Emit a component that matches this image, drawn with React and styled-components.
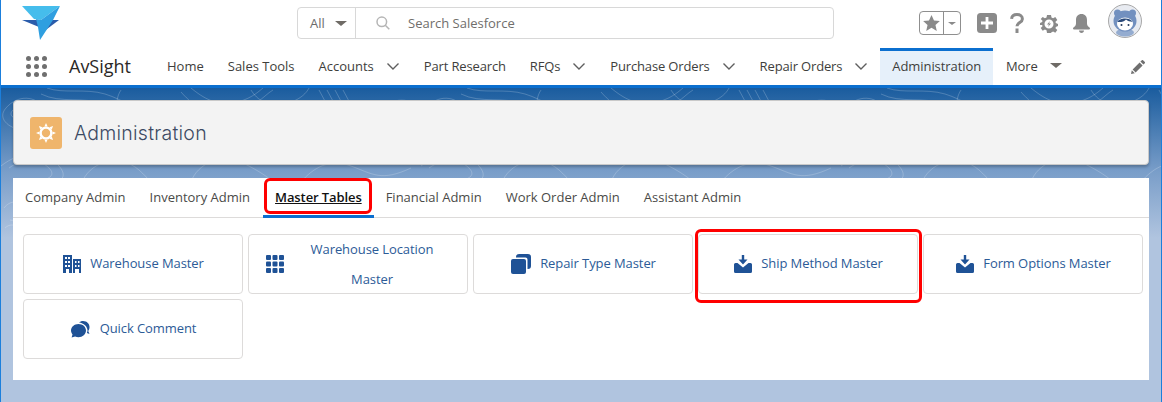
import React from "react";
import styled, { createGlobalStyle } from "styled-components";

const contour = `<svg xmlns='http://www.w3.org/2000/svg' width='420' height='150' fill='none' stroke='white' stroke-opacity='0.2' stroke-width='1'><path d='M5 20c12-14 30-12 38 0s-8 24-22 22S-4 30 5 20z'/><path d='M12 22c8-7 18-6 22 0s-5 12-12 11-16-5-10-11z'/><path d='M40 6c20 10 44 2 60 10s26 24 50 18'/><path d='M46 0c16 6 38 0 58 6s30 18 52 16'/><path d='M120 2c-8 12-4 28 12 34s34-4 40-18'/><path d='M180 4c14 16 32 26 52 22s30-18 40-24'/><path d='M190 0c12 10 26 18 42 15s24-10 30-15'/><path d='M250 2c6 10 18 18 34 14s22-12 24-16'/><path d='M318 2l14 26M326 2l14 26M334 2l14 26M342 2l14 26'/><path d='M370 30c16-20 34-22 48-12'/><path d='M378 36c14-14 28-16 40-8'/><path d='M0 78c20-16 44-16 58 0s-10 22-30 20'/><path d='M8 80c14-10 30-10 40 0s-8 14-20 13'/><path d='M82 92c10-20 38-26 56-10s8 14 8 14'/><path d='M190 94c6-18 30-30 54-18s30 20 30 20'/><path d='M300 94c12-14 28-24 50-16s30 16 60 2'/><path d='M366 62c10-8 26-8 36 0'/><path d='M3 120c6-8 16-8 20 0s-6 14-14 12'/><path d='M4 140c4-4 10-4 14 0'/></svg>`;

const Global = createGlobalStyle`
  html, body { margin: 0; padding: 0; }
  body { font-family: "Open Sans", "Liberation Sans", sans-serif; background: #b0c4df; }
  * { box-sizing: border-box; }
`;

const Page = styled.div`
  width: 1162px;
  height: 402px;
  overflow: hidden;
  display: flex;
  flex-direction: column;
  border-left: 1px solid #1b7fdc;
  border-right: 1px solid #1b7fdc;
  background: #b0c4df;
`;

const Header = styled.header`
  flex: none;
  height: 88px;
  background: #fff;
  border-bottom: 3px solid #0b6fcf;
  display: flex;
  flex-direction: column;
`;

const TopBar = styled.div`
  height: 46px;
  flex: none;
  display: grid;
  grid-template-columns: 296px 537px 1fr;
  align-items: start;
`;

const LogoCell = styled.div`
  padding: 6px 0 0 20px;
  svg { display: block; }
`;

const Search = styled.div`
  margin-top: 7px;
  height: 32px;
  border: 1px solid #d8d8d8;
  border-radius: 4px;
  display: flex;
  align-items: center;
  font-size: 13px;
  color: #6b6b6b;
`;

const ScopeSelect = styled.div`
  width: 58px;
  height: 100%;
  border-right: 1px solid #d8d8d8;
  display: flex;
  align-items: center;
  padding-left: 12px;
  gap: 10px;
`;

const Caret = styled.span`
  display: inline-block;
  width: 0;
  height: 0;
  border-left: ${p => p.$size}px solid transparent;
  border-right: ${p => p.$size}px solid transparent;
  border-top: ${p => Math.round(p.$size * 0.85)}px solid ${p => p.$color || "#6f6b66"};
`;

const SearchField = styled.div`
  flex: 1;
  display: flex;
  align-items: center;
  padding-left: 20px;
  gap: 18px;
  color: #706e6b;
  svg { display: block; }
`;

const Tools = styled.div`
  display: flex;
  align-items: flex-start;
  padding-left: 85px;
  height: 100%;
`;

const Favorite = styled.div`
  margin-top: 11px;
  width: 42px;
  height: 24px;
  border: 1px solid #8f8f8f;
  border-radius: 4px;
  display: flex;
  align-items: center;
`;

const FavStar = styled.div`
  width: 24px;
  height: 100%;
  border-right: 1px solid #8f8f8f;
  display: flex;
  align-items: center;
  justify-content: center;
`;

const FavCaret = styled.div`
  flex: 1;
  display: flex;
  align-items: center;
  justify-content: center;
`;

const ToolIcon = styled.div`
  margin-top: ${p => p.$top}px;
  margin-left: ${p => p.$left}px;
  line-height: 0;
`;

const NavBar = styled.nav`
  flex: 1;
  display: flex;
  align-items: stretch;
  position: relative;
`;

const Waffle = styled.div`
  width: 68px;
  padding: 10px 0 0 25px;
`;

const WaffleGrid = styled.div`
  width: 22px;
  display: grid;
  grid-template-columns: repeat(3, 5px);
  gap: 3px;
`;

const Dot = styled.span`
  width: 5px;
  height: 5px;
  border-radius: 50%;
  background: #6f6f6f;
`;

const AppName = styled.div`
  width: 86px;
  font-size: 18px;
  line-height: 39px;
  color: #2b2826;
  padding-top: 1px;
`;

const NavItem = styled.div`
  display: flex;
  align-items: center;
  font-size: 13px;
  letter-spacing: ${p => (p.$loose ? "0" : p.$active ? "-0.08px" : "-0.15px")};
  color: #3e3e3c;
  padding: 0 12px ${p => (p.$active ? "4px" : "0")};
  height: ${p => (p.$active ? "37px" : "39px")};
  margin-top: ${p => (p.$active ? "2px" : "0")};
  background: ${p => (p.$active ? "#e6f0fa" : "transparent")};
  border-top: ${p => (p.$active ? "3px solid #0b6fcf" : "none")};
  svg { display: block; margin-left: 12px; }
`;

const MoreItem = styled(NavItem)`
  padding-left: 13px;
`;

const MoreCaret = styled.span`
  margin-left: 12px;
  display: inline-flex;
`;

const Pencil = styled.div`
  position: absolute;
  right: 16px;
  top: 14px;
  line-height: 0;
`;

const Canvas = styled.main`
  flex: 1;
  padding: 12px 12px 0 12px;
  background-color: #b0c4df;
  background-image: url("data:image/svg+xml;utf8,${encodeURIComponent(contour)}"),
    linear-gradient(to bottom, #1a5c9e 0, #7a9ec9 84px, #b0c4df 150px, #b0c4df 100%);
  background-repeat: repeat-x, no-repeat;
  background-size: 420px 150px, 100% 100%;
  display: flex;
  flex-direction: column;
  gap: 13px;
`;

const TitlePanel = styled.section`
  height: 65px;
  flex: none;
  background: #f3f3f3;
  border: 1px solid #c9c9c9;
  border-radius: 4px;
  box-shadow: 0 2px 3px rgba(0, 0, 0, 0.25);
  display: flex;
  align-items: center;
  padding-left: 16px;
  gap: 12px;
`;

const TitleIcon = styled.div`
  width: 32px;
  height: 32px;
  border-radius: 3px;
  background: #efb56c;
  display: flex;
  align-items: center;
  justify-content: center;
`;

const Title = styled.h1`
  margin: 0;
  font-family: "Inter", "Open Sans", sans-serif;
  font-weight: 300;
  font-size: 19.5px;
  letter-spacing: 0.25px;
  color: #3c4a63;
`;

const ContentPanel = styled.section`
  background: #fff;
  height: 202px;
  flex: none;
  display: flex;
  flex-direction: column;
`;

const TabBar = styled.div`
  height: 40px;
  flex: none;
  border-bottom: 1px solid #dddbda;
  display: flex;
`;

const Tab = styled.div`
  position: relative;
  padding: 0 12px ${p => (p.$active ? "0" : "3px")};
  margin-left: ${p => (p.$active ? "1px" : "0")};
  height: 40px;
  display: flex;
  align-items: center;
  font-size: 13px;
  letter-spacing: ${p => (p.$active ? "-0.1px" : "0")};
  color: ${p => (p.$active ? "#111" : "#4a4a48")};
  font-weight: ${p => (p.$active ? 600 : 400)};
  text-decoration: ${p => (p.$active ? "underline" : "none")};
  border-bottom: ${p => (p.$active ? "3px solid #0b6fcf" : "none")};
`;

const Annotation = styled.span`
  position: absolute;
  border: 3px solid #f00;
  border-radius: 6px;
  pointer-events: none;
  left: ${p => p.$l}px;
  top: ${p => p.$t}px;
  right: ${p => p.$r}px;
  bottom: ${p => p.$b}px;
`;

const CardGrid = styled.div`
  display: grid;
  grid-template-columns: repeat(5, 220px);
  grid-auto-rows: 60px;
  gap: 5px;
  padding: 16px 0 0 10px;
`;

const Card = styled.div`
  position: relative;
  border: 1px solid #dddbda;
  border-radius: 4px;
  display: flex;
  align-items: center;
  justify-content: center;
  gap: 9px;
  padding-left: 1px;
  font-size: 13px;
  letter-spacing: -0.08px;
  color: #2c5b97;
  svg { flex: none; display: block; }
`;

const CardLabel = styled.span`
  margin-top: ${p => (p.$w ? "0" : "-2px")};
  text-align: center;
  line-height: 30px;
  width: ${p => (p.$w ? `${p.$w}px` : "auto")};
`;

const BLUE = "#1f5296";

const Chevron = () => (
  <svg width="14" height="14" viewBox="0 0 14 14" fill="none" stroke="#5f5f5f" strokeWidth="1.4">
    <path d="M1.500 4.500 7 10l5.500-5.500" />
  </svg>
);

const BuildingIcon = () => (
  <svg width="18" height="18" viewBox="0 0 18 18" fill={BLUE}>
    <path fillRule="evenodd" d="M0 0h9v18H6v-4H3v4H0zM2 2v2h2V2zm3 0v2h2V2zM2 6v2h2V6zm3 0v2h2V6zM2 10v2h2v-2zm3 0v2h2v-2z" />
    <path fillRule="evenodd" d="M10 4h8v14h-2v-4h-4v4h-2zm2 2v2h1.500V6zm3 0v2h1.500V6zm-3 4v2h1.500v-2zm3 0v2h1.500v-2z" />
  </svg>
);

const GridIcon = () => (
  <svg width="18" height="18" viewBox="0 0 18 18" fill={BLUE}>
    {[0, 6.5, 13].flatMap(x =>
      [0, 6.5, 13].map(y => <rect key={`${x}-${y}`} x={x} y={y} width="5" height="5" rx="1" />)
    )}
  </svg>
);

const StackIcon = () => (
  <svg width="20" height="20" viewBox="0 0 20 20" fill={BLUE}>
    <rect x="0" y="5" width="15" height="15" rx="2" />
    <path d="M5 3.500V3a3 3 0 0 1 3-3h9a3 3 0 0 1 3 3v9a3 3 0 0 1-3 3h-.500V5.500a2 2 0 0 0-2-2z" />
  </svg>
);

const InboxIcon = () => (
  <svg width="18" height="18" viewBox="0 0 18 18" fill={BLUE}>
    <path d="M7.800 0h2.400v4.500H13.500L9 9.500 4.500 4.500h3.300z" />
    <path d="M0 9.500A1.500 1.500 0 0 1 1.500 8H3.500L9 12.500 14.500 8h2A1.500 1.500 0 0 1 18 9.500V16.500A1.500 1.500 0 0 1 16.500 18h-15A1.500 1.500 0 0 1 0 16.500z" />
  </svg>
);

const ChatIcon = () => (
  <svg width="20" height="17" viewBox="0 0 20 17" fill={BLUE}>
    <path d="M7.500 3C3.400 3 0 5.900 0 9.500c0 1.500.6 2.800 1.500 3.900L.6 16.500l3.500-1.100c1 .5 2.200.8 3.400.8 4.100 0 7.500-3 7.500-6.700S11.600 3 7.500 3z" />
    <path d="M8 1.500C9 .6 10.400 0 12 0c4.100 0 6.500 3 6.500 6 0 1.600-.5 3-1.300 4l1.300 3-2.600-.9c.3-.9.600-1.800.6-2.600C16.500 5.500 12.800 2 8 1.500z" />
  </svg>
);

const cards = [
  { label: "Warehouse Master", icon: <BuildingIcon /> },
  { label: "Warehouse Location Master", icon: <GridIcon />, width: 158 },
  { label: "Repair Type Master", icon: <StackIcon /> },
  { label: "Ship Method Master", icon: <InboxIcon />, mark: true },
  { label: "Form Options Master", icon: <InboxIcon /> },
  { label: "Quick Comment", icon: <ChatIcon /> },
];

const nav = [
  { label: "Home", loose: true },
  { label: "Sales Tools", loose: true },
  { label: "Accounts", menu: true, loose: true },
  { label: "Part Research" },
  { label: "RFQs", menu: true },
  { label: "Purchase Orders", menu: true },
  { label: "Repair Orders", menu: true },
];

const tabs = ["Company Admin", "Inventory Admin", "Master Tables", "Financial Admin", "Work Order Admin", "Assistant Admin"];

export default function App() {
  return (
    <Page>
      <Global />
      <Header>
        <TopBar>
          <LogoCell>
            <svg width="39" height="35" viewBox="0 0 39 35">
              <path d="M1 0H39L20 14 13 13z" fill="#45bdec" />
              <path d="M1 14H17L18 21z" fill="#2a5cab" />
              <path d="M38 14H31L22 26z" fill="#2a5cab" />
              <path d="M39 0 32 14 19 34 17 21 15 13 20 14z" fill="#2f9fe0" />
            </svg>
          </LogoCell>
          <Search>
            <ScopeSelect>
              All <Caret $size={6} />
            </ScopeSelect>
            <SearchField>
              <svg width="14" height="14" viewBox="0 0 14 14" fill="none" stroke="#b5b5b5" strokeWidth="1.500">
                <circle cx="5.800" cy="5.800" r="4.800" />
                <path d="m9.300 9.300 4 4" />
              </svg>
              Search Salesforce
            </SearchField>
          </Search>
          <Tools>
            <Favorite>
              <FavStar>
                <svg width="17" height="16" viewBox="0 0 24 23" fill="#8a8a8a">
                  <path d="m12 0 3.600 8 8.400.800-6.300 5.700 1.900 8.500L12 18.500 4.400 23l1.900-8.500L0 8.800 8.400 8z" />
                </svg>
              </FavStar>
              <FavCaret>
                <Caret $size={4} $color="#8a8a8a" />
              </FavCaret>
            </Favorite>
            <ToolIcon $top={13} $left={16}>
              <svg width="20" height="20" viewBox="0 0 20 20">
                <rect width="20" height="20" rx="3.500" fill="#8a8a8a" />
                <path d="M10 4v12M4 10h12" stroke="#fff" strokeWidth="2.800" />
              </svg>
            </ToolIcon>
            <ToolIcon $top={13} $left={13}>
              <svg width="14" height="20" viewBox="0 0 14 20" fill="none" stroke="#8a8a8a" strokeWidth="3">
                <path d="M1.600 5.800C1.800 3.200 4 1.600 7 1.600s5.400 1.700 5.400 4.300c0 3.600-5.400 3.800-5.400 7.400" />
                <path d="M7 15.500V20" />
              </svg>
            </ToolIcon>
            <ToolIcon $top={15} $left={16}>
              <svg width="18" height="18" viewBox="0 0 18 18">
                <path fill="#8a8a8a" fillRule="evenodd" d="M7 0h4l.5 2.500 1.600.7L15.300 2l2 3-1.800 1.800.3 1.200 2.200 1v2l-2.200 1-.3 1.200 1.800 1.800-2 2.800-2.200-1.200-1.600.7L11 18H7l-.5-2.700-1.600-.7L2.700 15.800l-2-2.800 1.800-1.800L2.200 10 0 10V8l2.200-1 .3-1.200L.7 4l2-2 2.200 1.200 1.600-.7zM9 4.500a4.500 4.500 0 1 0 0 9 4.500 4.500 0 0 0 0-9z" />
                <path d="M10 6 7 9.500h2L8 12l3-3.500H9z" fill="#8a8a8a" />
              </svg>
            </ToolIcon>
            <ToolIcon $top={14} $left={14}>
              <svg width="19" height="19" viewBox="0 0 19 19" fill="#8a8a8a">
                <path d="M9.500 0C6 0 4 2.500 4 6v3.500C4 11.500 2.800 12.500 1.500 13.500c-.8.600-.6 2 .5 2h15c1.100 0 1.300-1.400.5-2-1.300-1-2.500-2-2.500-4V6c0-3.500-2-6-5.500-6z" />
                <path d="M7 16.500h5c0 1.400-1.100 2.500-2.500 2.500S7 17.900 7 16.500z" />
              </svg>
            </ToolIcon>
            <ToolIcon $top={4} $left={17}>
              <svg width="34" height="34" viewBox="0 0 34 34">
                <circle cx="17" cy="17" r="16.500" fill="#e8ebf1" stroke="#a8a8a8" />
                <circle cx="9.500" cy="9" r="3.500" fill="#7290bf" />
                <circle cx="24.500" cy="9" r="3.500" fill="#7290bf" />
                <ellipse cx="17" cy="28.500" rx="9" ry="4" fill="#94acd0" />
                <ellipse cx="17" cy="17" rx="11.500" ry="10.500" fill="#7290bf" />
                <ellipse cx="17" cy="20" rx="8" ry="6.500" fill="#fff" />
                <path d="M9.500 18c1.500-4 12-5.500 15 0-2.500-.5-5-1-6.500-2.500-1 1.800-5.500 3-8.500 2.500z" fill="#2b4a7a" />
                <circle cx="13.500" cy="21" r="1" fill="#23395d" />
                <circle cx="20.500" cy="21" r="1" fill="#23395d" />
              </svg>
            </ToolIcon>
          </Tools>
        </TopBar>
        <NavBar>
          <Waffle>
            <WaffleGrid>
              {Array.from({ length: 9 }).map((_, i) => <Dot key={i} />)}
            </WaffleGrid>
          </Waffle>
          <AppName>AvSight</AppName>
          {nav.map(n => (
            <NavItem key={n.label} $loose={n.loose}>
              {n.label}
              {n.menu && <Chevron />}
            </NavItem>
          ))}
          <NavItem $active>Administration</NavItem>
          <MoreItem>
            More
            <MoreCaret><Caret $size={6} /></MoreCaret>
          </MoreItem>
          <Pencil>
            <svg width="14" height="14" viewBox="0 0 14 14" fill="#6f6f6f">
              <path d="M0 14l.8-3.800L3.800 13.200zM1.600 9.400 8.600 2.400l3 3-7 7zM9.400 1.600 10.600.4a1.200 1.200 0 0 1 1.700 0l1.300 1.300a1.200 1.200 0 0 1 0 1.700L12.400 4.600z" />
            </svg>
          </Pencil>
        </NavBar>
      </Header>
      <Canvas>
        <TitlePanel>
          <TitleIcon>
            <svg width="20" height="20" viewBox="0 0 20 20">
              <g fill="#fff">
                {[0, 45, 90, 135, 180, 225, 270, 315].map(a => (
                  <path key={a} d="M8.400 3.500 10 0l1.600 3.500z" transform={`rotate(${a} 10 10)`} />
                ))}
              </g>
              <circle cx="10" cy="10" r="5.400" fill="none" stroke="#fff" strokeWidth="2.400" />
            </svg>
          </TitleIcon>
          <Title>Administration</Title>
        </TitlePanel>
        <ContentPanel>
          <TabBar>
            {tabs.map((t, i) => (
              <Tab key={t} $active={i === 2}>
                {t}
                {i === 2 && <Annotation $l={1} $t={0} $r={2} $b={1} />}
              </Tab>
            ))}
          </TabBar>
          <CardGrid>
            {cards.map(c => (
              <Card key={c.label}>
                {c.icon}
                <CardLabel $w={c.width}>{c.label}</CardLabel>
                {c.mark && <Annotation $l={-4} $t={-6} $r={-5} $b={-10} />}
              </Card>
            ))}
          </CardGrid>
        </ContentPanel>
      </Canvas>
    </Page>
  );
}
